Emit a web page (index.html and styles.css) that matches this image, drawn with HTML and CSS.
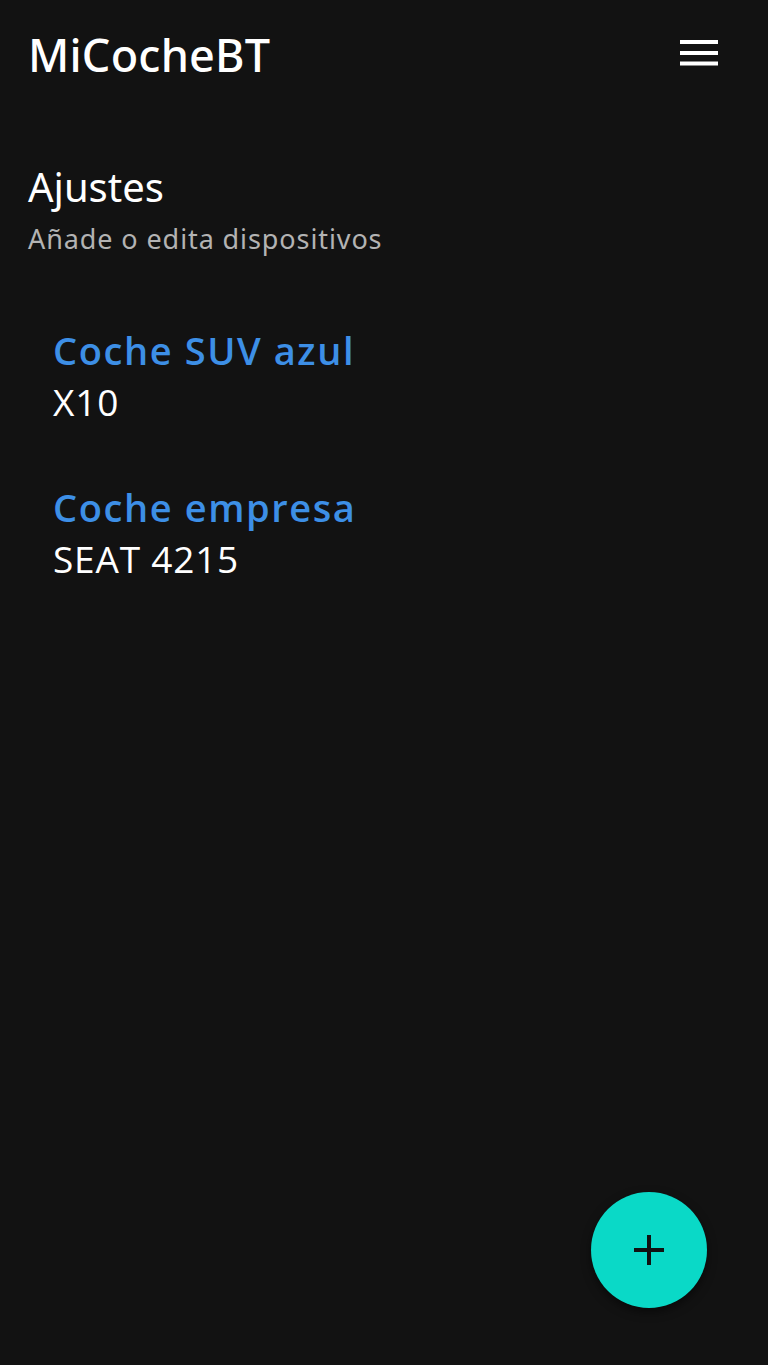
FILE: index.html
```html
<!DOCTYPE html>
<html lang="es">
<head>
<meta charset="utf-8">
<link rel="stylesheet" href="styles.css">
</head>
<body>
<div class="app">
  <header class="topbar">
    <div class="brand">MiCocheBT</div>
    <button class="menu" aria-label="menu">
      <svg width="38" height="26" viewBox="0 0 38 26"><rect x="0" y="0" width="38" height="4" fill="#fff"/><rect x="0" y="11" width="38" height="4" fill="#fff"/><rect x="0" y="21.5" width="38" height="4" fill="#fff"/></svg>
    </button>
  </header>
  <section class="heading">
    <h1 class="title">Ajustes</h1>
    <p class="subtitle">Añade o edita dispositivos</p>
  </section>
  <ul class="devices">
    <li class="device">
      <div class="device-name">Coche SUV azul</div>
      <div class="device-id">X10</div>
    </li>
    <li class="device">
      <div class="device-name">Coche empresa</div>
      <div class="device-id">SEAT 4215</div>
    </li>
  </ul>
  <button class="fab" aria-label="añadir">
    <svg width="30" height="30" viewBox="0 0 30 30"><rect x="13" y="0" width="4" height="30" fill="#111"/><rect x="0" y="13" width="30" height="4" fill="#111"/></svg>
  </button>
</div>
</body>
</html>
```
FILE: styles.css
```css
html, body {
  margin: 0;
  padding: 0;
  background: #121212;
}
.app {
  width: 768px;
  height: 1365px;
  position: relative;
  background: #121212;
  color: #fff;
  font-family: "Noto Sans", Roboto, sans-serif;
  box-sizing: border-box;
  padding: 0 28px;
}
.topbar {
  display: flex;
  justify-content: space-between;
  align-items: center;
  height: 106px;
}
.brand {
  font-size: 45px;
  font-weight: 500;
  line-height: 1;
  margin-top: 2px;
  letter-spacing: 0.2px;
}
.menu {
  background: none;
  border: none;
  padding: 0;
  margin-right: 22px;
  display: flex;
}
.heading {
  margin-top: 57px;
}
.title {
  margin: 0;
  font-weight: 400;
  font-size: 40px;
  line-height: 48px;
}
.subtitle {
  margin: 10px 0 0;
  font-size: 27px;
  line-height: 36px;
  color: #b3b3b3;
  letter-spacing: 0.9px;
}
.devices {
  list-style: none;
  margin: 67px 0 0;
  padding: 0 0 0 25px;
  display: flex;
  flex-direction: column;
  gap: 53px;
}
.device-name {
  color: #3d8fe6;
  font-family: "Open Sans", sans-serif;
  font-weight: 600;
  font-size: 38px;
  line-height: 52px;
  letter-spacing: 1.6px;
}
.device-id {
  color: #fff;
  font-family: "Open Sans", sans-serif;
  font-size: 37px;
  line-height: 52px;
  letter-spacing: 0.8px;
}
.fab {
  position: absolute;
  left: 591px;
  top: 1192px;
  width: 116px;
  height: 116px;
  border-radius: 50%;
  border: none;
  background: #0ad9c7;
  display: flex;
  align-items: center;
  justify-content: center;
  padding: 0;
  box-shadow: 0 4px 10px rgba(0,0,0,0.5);
}
```
